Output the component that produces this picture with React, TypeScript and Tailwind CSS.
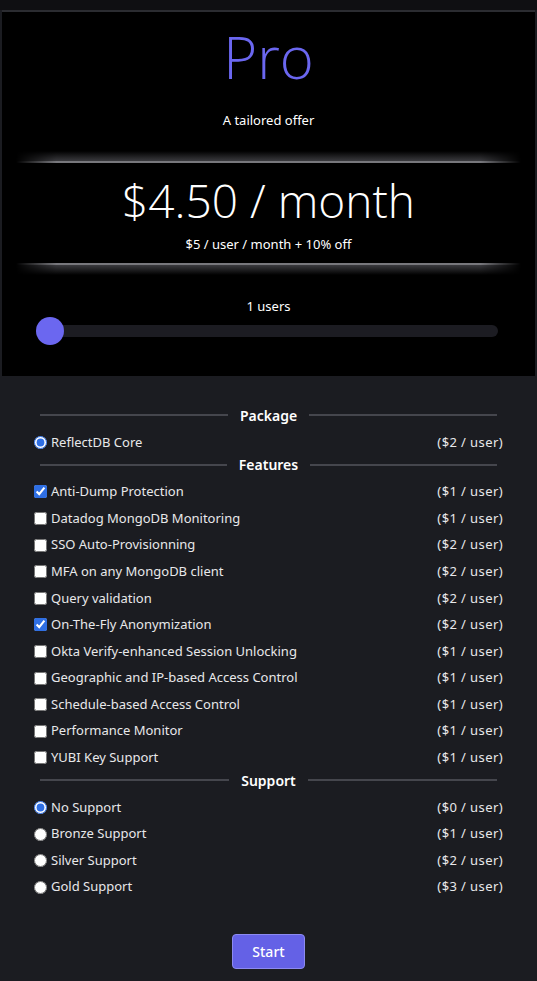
import { useState } from "react";

type Opt = { label: string; price: number; checked?: boolean };

const features: Opt[] = [
  { label: "Anti-Dump Protection", price: 1, checked: true },
  { label: "Datadog MongoDB Monitoring", price: 1 },
  { label: "SSO Auto-Provisionning", price: 2 },
  { label: "MFA on any MongoDB client", price: 2 },
  { label: "Query validation", price: 2 },
  { label: "On-The-Fly Anonymization", price: 2, checked: true },
  { label: "Okta Verify-enhanced Session Unlocking", price: 1 },
  { label: "Geographic and IP-based Access Control", price: 1 },
  { label: "Schedule-based Access Control", price: 1 },
  { label: "Performance Monitor", price: 1 },
  { label: "YUBI Key Support", price: 1 },
];

const support: Opt[] = [
  { label: "No Support", price: 0, checked: true },
  { label: "Bronze Support", price: 1 },
  { label: "Silver Support", price: 2 },
  { label: "Gold Support", price: 3 },
];

function SectionTitle({ title }: { title: string }) {
  return (
    <div className="flex items-center gap-3 px-[6px] h-[18px] mb-[5px]">
      <div className="flex-1 h-[2px] bg-[#45464d]" />
      <span className="text-[14px] font-semibold text-white">{title}</span>
      <div className="flex-1 h-[2px] bg-[#45464d]" />
    </div>
  );
}

function Row({ opt, type, name }: { opt: Opt; type: "checkbox" | "radio"; name?: string }) {
  return (
    <label className="flex items-center justify-between h-[26.6px] text-[13px] text-[#e8e8ea]">
      <span className="flex items-center gap-[4px]">
        <input
          type={type}
          name={name}
          defaultChecked={opt.checked}
          className="w-[13px] h-[13px] m-0 accent-[#2f6fe4]"
        />
        {opt.label}
      </span>
      <span className="tracking-[0.4px]">(${opt.price} / user)</span>
    </label>
  );
}

export default function App() {
  const [users, setUsers] = useState(1);

  return (
    <div
      className="min-h-[981px] bg-[#1b1c21] flex flex-col"
      style={{ fontFamily: '"Noto Sans", "Open Sans", sans-serif' }}
    >
      <div className="h-[10px] bg-[#0f0f12]" />
      <div className="mx-[2px] bg-black border-t-2 border-[#2b2c31] h-[366px] flex flex-col items-center">
        <h1
          className="mt-[11px] text-[58px] leading-[68px] font-light text-[#6b67f0]"
          style={{ fontFamily: '"Open Sans", sans-serif' }}
        >
          Pro
        </h1>
        <p className="mt-[20px] text-[13px] text-white">A tailored offer</p>
        <div className="mt-[20px] w-[505px] h-[10px] bg-gradient-to-b from-transparent to-[#3a3a3e] [mask-image:linear-gradient(to_right,transparent,black_8%,black_92%,transparent)]" />
        <div className="w-[505px] h-[2px] bg-[#77777c] [mask-image:linear-gradient(to_right,transparent,black_8%,black_92%,transparent)]" />
        <div
          className="mt-[9px] text-[46px] leading-[56px] font-light text-white"
          style={{ fontFamily: '"Open Sans", sans-serif' }}
        >
          $4.50 / month
        </div>
        <p className="mt-[7px] text-[13px] text-white">$5 / user / month + 10% off</p>
        <div className="mt-[9px] w-[505px] h-[2px] bg-[#77777c] [mask-image:linear-gradient(to_right,transparent,black_8%,black_92%,transparent)]" />
        <div className="w-[505px] h-[10px] bg-gradient-to-b from-[#3a3a3e] to-transparent [mask-image:linear-gradient(to_right,transparent,black_8%,black_92%,transparent)]" />
        <p className="mt-[22px] text-[13px] text-white">{users} users</p>
        <div className="relative mt-[8px] w-[458px] h-[12px] rounded-full bg-[#1c1c22]">
          <input
            type="range"
            min={1}
            max={100}
            value={users}
            onChange={(e) => setUsers(Number(e.target.value))}
            className="absolute inset-0 w-full opacity-0"
          />
          <div className="absolute left-[-4px] top-[-8px] w-[28px] h-[28px] rounded-full bg-[#6b67f0] pointer-events-none" />
        </div>
      </div>

      <div className="px-[34px] pt-[30px] flex flex-col">
        <SectionTitle title="Package" />
        <Row opt={{ label: "ReflectDB Core", price: 2, checked: true }} type="radio" name="pkg" />
        <SectionTitle title="Features" />
        {features.map((f) => (
          <Row key={f.label} opt={f} type="checkbox" />
        ))}
        <SectionTitle title="Support" />
        {support.map((s) => (
          <Row key={s.label} opt={s} type="radio" name="support" />
        ))}
        <div className="flex justify-center mt-[33px]">
          <button className="w-[73px] h-[35px] rounded-[4px] bg-[#6461e6] border border-[#8c8af0] text-white text-[14px] font-medium">
            Start
          </button>
        </div>
      </div>
    </div>
  );
}
